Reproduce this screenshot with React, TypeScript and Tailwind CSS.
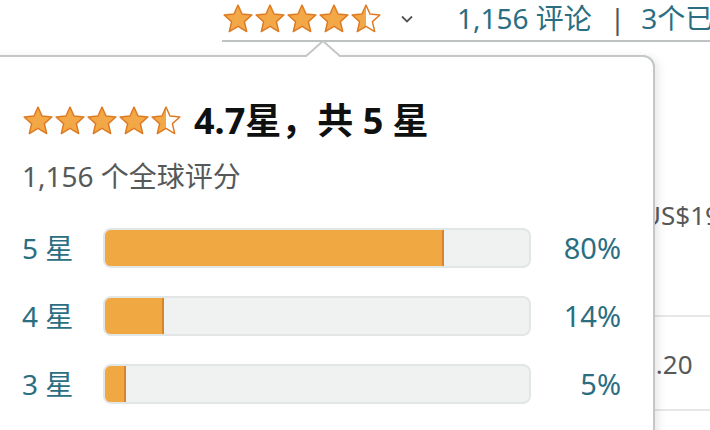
import React from "react"

const FONT = "font-['Noto_Sans','Noto_Sans_CJK_SC',sans-serif]"

function Star({ size, fill, id }: { size: number; fill: "full" | "half"; id: string }) {
  const pts = "12,1.6 15,8.3 22.4,9 16.8,14 18.5,21.4 12,17.5 5.5,21.4 7.2,14 1.6,9 9,8.3"
  return (
    <svg className="shrink-0" width={size} height={size} viewBox="0 0 24 24">
      <defs>
        <linearGradient id={id} x1="0" x2="1" y1="0" y2="0">
          <stop offset="50%" stopColor="#f3a847" />
          <stop offset="50%" stopColor="#ffffff" />
        </linearGradient>
      </defs>
      <polygon
        points={pts}
        fill={fill === "full" ? "#f3a847" : `url(#${id})`}
        stroke="#de7a22"
        strokeWidth="1.1"
        strokeLinejoin="round"
      />
    </svg>
  )
}

function Stars({ size, prefix }: { size: number; prefix: string }) {
  return (
    <div className="flex items-center shrink-0">
      {[0, 1, 2, 3].map((i) => (
        <Star key={i} size={size} fill="full" id={`${prefix}-${i}`} />
      ))}
      <Star size={size} fill="half" id={`${prefix}-half`} />
    </div>
  )
}

const rows = [
  { label: "5 星", pct: 80 },
  { label: "4 星", pct: 14 },
  { label: "3 星", pct: 5 },
]

export default function App() {
  return (
    <div className={`relative w-[710px] h-[430px] overflow-hidden bg-white ${FONT}`}>
      {/* top trigger strip */}
      <div className="ml-[222px] h-[42px] flex items-start border-b-2 border-[#bfc2c2] whitespace-nowrap">
        <div className="mt-[3px]">
          <Stars size={32} prefix="top" />
        </div>
        <svg className="shrink-0 ml-[18px] mt-[14px]" width="14" height="10" viewBox="0 0 14 10">
          <path d="M2 2.5 L7 7.5 L12 2.5" fill="none" stroke="#555" strokeWidth="1.8" />
        </svg>
        <span className="shrink-0 ml-[43px] text-[28px] leading-[37px] text-[#2b6e82]">1,156 评论</span>
        <span className="shrink-0 ml-[18px] text-[28px] leading-[37px] text-[#555]">|</span>
        <span className="shrink-0 ml-[16px] text-[28px] leading-[37px] text-[#2b6e82]">3个已回答问题</span>
      </div>

      {/* page content behind the popover */}
      <div className="ml-[653px] pt-[156px] text-[26px] leading-[34px] text-[#565959] whitespace-nowrap overflow-hidden">
        <div className="h-[119px] border-b-2 border-[#e7e7e7]">
          <span className="ml-[-11px]">US$19.99</span>
        </div>
        <div className="h-[94px] pt-[30px] border-b-2 border-[#e7e7e7]">
          <span className="ml-[-12px]">8.20</span>
        </div>
      </div>

      {/* popover */}
      <div className="absolute left-[-20px] top-[55px] w-[675px] h-[420px] bg-white border-2 border-[#c4c7c7] rounded-[12px] shadow-[3px_2px_10px_rgba(0,0,0,0.10)] pl-[40px] pt-[44px]">
        <svg className="absolute left-[323px] top-[-17px]" width="36" height="18" viewBox="0 0 36 18">
          <path d="M0 17 L18 1 L36 17 Z" fill="#ffffff" />
          <path d="M0 17 L18 1 L36 17" fill="none" stroke="#c4c7c7" strokeWidth="2" />
          <rect x="0" y="17" width="36" height="2" fill="#ffffff" />
        </svg>

        <div className="flex items-center">
          <Stars size={32} prefix="pop" />
          <span className="ml-[12px] text-[36px] leading-[40px] font-bold text-[#0f1111] whitespace-nowrap">4.7星，共 5 星</span>
        </div>
        <div className="mt-[18px] text-[28px] leading-[34px] text-[#565959]">1,156 个全球评分</div>

        <div className="mt-[35px] flex flex-col gap-[28px]">
          {rows.map((r) => (
            <div key={r.label} className="flex items-center h-[40px]">
              <span className="w-[81px] text-[28px] text-[#2b6e82]">{r.label}</span>
              <div className="relative w-[428px] h-[40px] rounded-[8px] bg-[#f0f2f2] border-2 border-[#e3e6e6] overflow-hidden">
                <div
                  className="absolute left-[-2px] top-[-2px] bottom-[-2px] bg-[#f0a843] border-2 border-[#d8842c] rounded-l-[8px]"
                  style={{ width: `calc(${r.pct}% + 2px)` }}
                />
              </div>
              <span className="w-[90px] text-right text-[29px] text-[#2b6e82]">{r.pct}%</span>
            </div>
          ))}
        </div>
      </div>
    </div>
  )
}
